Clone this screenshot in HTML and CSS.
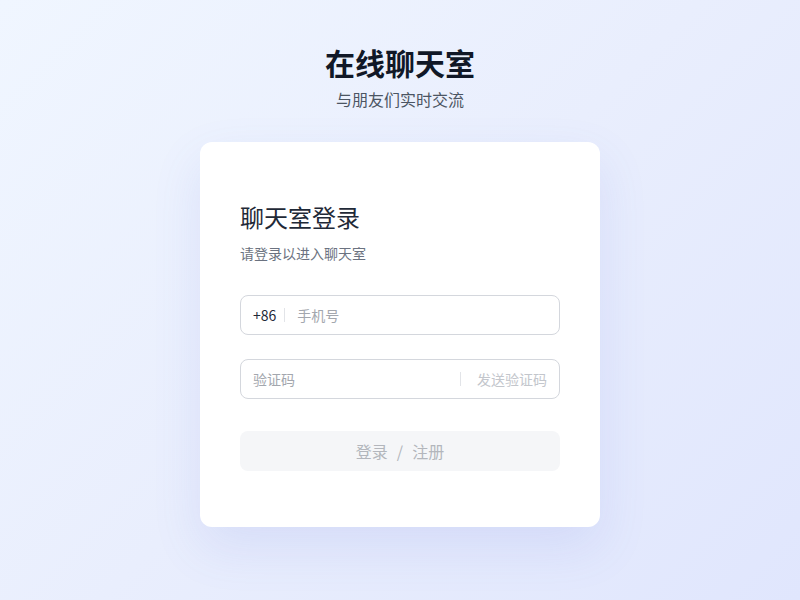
FILE: index.html
```html
<!DOCTYPE html>
<html lang="zh-CN">
<head>
<meta charset="utf-8">
<title>在线聊天室</title>
<link rel="stylesheet" href="styles.css">
</head>
<body>
<div class="page">
  <header class="hero">
    <h1 class="hero-title">在线聊天室</h1>
    <p class="hero-sub">与朋友们实时交流</p>
  </header>
  <main class="card">
    <h2 class="card-title">聊天室登录</h2>
    <p class="card-sub">请登录以进入聊天室</p>
    <div class="field field-phone">
      <span class="prefix">+86</span>
      <span class="divider"></span>
      <input class="input" type="text" placeholder="手机号">
    </div>
    <div class="field field-code">
      <input class="input" type="text" placeholder="验证码">
      <span class="send">发送验证码</span>
    </div>
    <button class="submit" type="button"><span>登录</span><span class="slash">/</span><span>注册</span></button>
  </main>
</div>
</body>
</html>
```
FILE: styles.css
```css
* { box-sizing: border-box; }
html, body { margin: 0; padding: 0; height: 100%; }
body {
  font-family: "Noto Sans CJK SC", "Noto Sans", sans-serif;
  background: linear-gradient(135deg, #f0f6ff 0%, #e9eefd 50%, #e0e6fd 100%);
  color: #1f2937;
}
.page {
  min-height: 100%;
  display: flex;
  flex-direction: column;
  align-items: center;
  padding-top: 44px;
}
.hero { text-align: center; }
.hero-title {
  margin: 0;
  font-size: 30px;
  line-height: 36px;
  font-weight: 700;
  color: #111827;
}
.hero-sub {
  margin: 7px 0 0;
  font-size: 16px;
  line-height: 24px;
  color: #4b5563;
}
.card {
  margin-top: 31px;
  width: 400px;
  background: #ffffff;
  border-radius: 12px;
  padding: 59px 40px 56px;
  box-shadow: 0 20px 50px rgba(90, 110, 210, 0.12);
  display: flex;
  flex-direction: column;
}
.card-title {
  margin: 0;
  font-size: 24px;
  line-height: 32px;
  font-weight: 400;
  color: #1f2937;
}
.card-sub {
  margin: 10px 0 0;
  font-size: 14px;
  line-height: 20px;
  color: #6b7280;
}
.field {
  height: 40px;
  border: 1px solid #d4d7dd;
  border-radius: 8px;
  display: flex;
  align-items: center;
  padding: 0 12px;
  font-size: 14px;
}
.field-phone { margin-top: 32px; }
.field-code { margin-top: 24px; }
.prefix { color: #1f2937; }
.divider {
  width: 1px;
  height: 14px;
  background: #e2e4e8;
  margin: 0 12px 0 8px;
}
.input {
  flex: 1;
  min-width: 0;
  border: none;
  outline: none;
  padding: 0;
  background: transparent;
  font: inherit;
  color: #1f2937;
}
.input::placeholder { color: #a3a7ae; }
.send {
  color: #c3c6cc;
  border-left: 1px solid #e2e4e8;
  padding-left: 16px;
  line-height: 14px;
}
.submit {
  margin-top: 32px;
  height: 40px;
  border: none;
  border-radius: 8px;
  background: #f5f6f8;
  color: #b3b6bc;
  font-family: inherit;
  font-size: 16px;
  display: flex;
  align-items: center;
  justify-content: center;
  padding: 0;
}
.slash { margin: 0 9px; }
```
